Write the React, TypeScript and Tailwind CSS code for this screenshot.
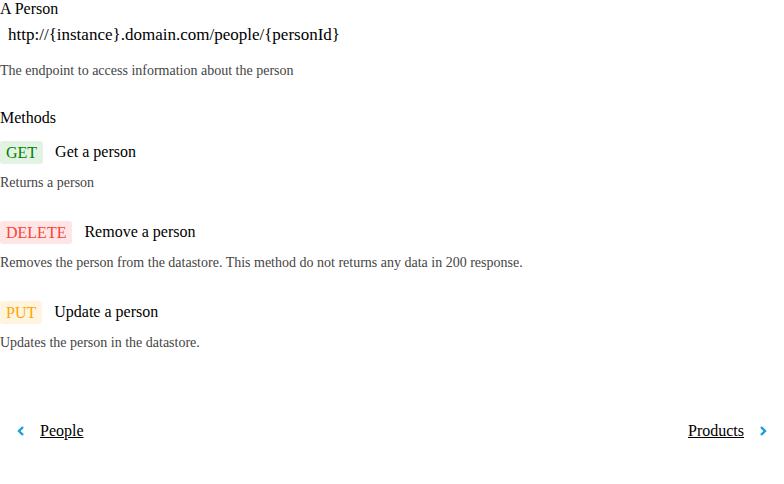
import React from "react";

const methods = [
  { m: "GET", title: "Get a person", desc: "Returns a person", text: "text-[#008000]", bg: "bg-[#e3f3e3]" },
  { m: "DELETE", title: "Remove a person", desc: "Removes the person from the datastore. This method do not returns any data in 200 response.", text: "text-[#ff4136]", bg: "bg-[#fde6e5]" },
  { m: "PUT", title: "Update a person", desc: "Updates the person in the datastore.", text: "text-[#ffa500]", bg: "bg-[#fff4e0]" },
];

export default function App() {
  return (
    <div className="w-[784px] h-[484px] bg-white text-black font-['Liberation_Serif',serif]">
      <div className="text-[16px] leading-[18px] pt-0">A Person</div>
      <div className="text-[17px] leading-[20px] pl-2 mt-[7px]">http://{"{instance}"}.domain.com/people/{"{personId}"}</div>
      <div className="text-[14px] leading-[16px] text-[#444] mt-[18px]">The endpoint to access information about the person</div>
      <div className="text-[16px] leading-[18px] mt-[30px]">Methods</div>
      <div className="mt-[13px] flex flex-col">
        {methods.map((x, i) => (
          <div key={x.m} className={i > 0 ? "mt-[29px]" : ""}>
            <div className="flex items-center">
              <span className={`${x.text} ${x.bg} text-[16px] leading-[23px] px-[6px] rounded-[3px]`}>{x.m}</span>
              <span className="text-[16px] ml-3">{x.title}</span>
            </div>
            <div className="text-[14px] leading-[16px] text-[#444] mt-[11px]">{x.desc}</div>
          </div>
        ))}
      </div>
      <div className="flex justify-between items-center mt-[68px] px-[16px]">
        <div className="flex items-center">
          <svg width="10" height="14" viewBox="0 0 10 14" className="mr-[14px]"><path d="M7 3 L3 7 L7 11" stroke="#1a9fdb" strokeWidth="2.4" fill="none" /></svg>
          <span className="text-[16px] underline">People</span>
        </div>
        <div className="flex items-center">
          <span className="text-[16px] underline">Products</span>
          <svg width="10" height="14" viewBox="0 0 10 14" className="ml-[14px]"><path d="M3 3 L7 7 L3 11" stroke="#1a9fdb" strokeWidth="2.4" fill="none" /></svg>
        </div>
      </div>
    </div>
  );
}
